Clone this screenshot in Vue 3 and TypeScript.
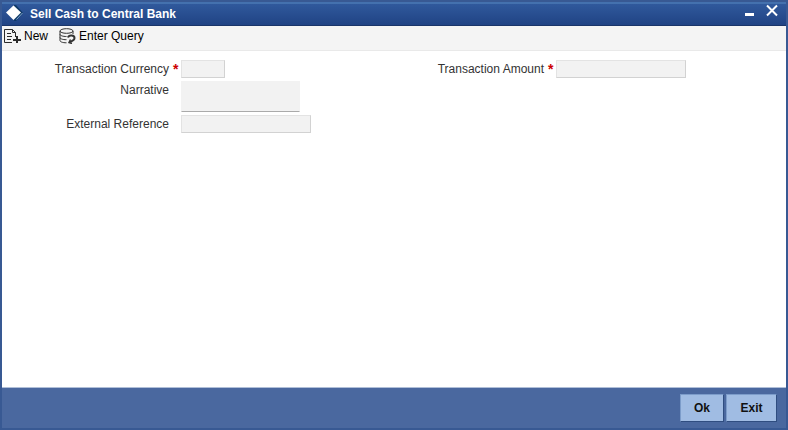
<script setup lang="ts">
import { ref } from 'vue'

const currency = ref('')
const narrative = ref('')
const externalReference = ref('')
const amount = ref('')
</script>

<template>
  <main class="window">
    <header class="titlebar">
      <svg class="logo" width="20" height="18" viewBox="0 0 20 18" aria-hidden="true">
        <path d="M9 1h2l7 8-7 8H9z" fill="#0f3a68" />
        <path d="M17.500 9l-6 6.500" fill="none" stroke="#7fa6c8" stroke-width="1" />
        <path d="M8.500 1.500L16 8.500 8.500 16 1 8.500z" fill="#fff" />
      </svg>
      <h1 class="title">Sell Cash to Central Bank</h1>
      <button class="control" type="button" aria-label="Minimize">
        <svg width="12" height="14" viewBox="0 0 12 14" aria-hidden="true">
          <path d="M1 9h9v3H1z" fill="#fff" />
        </svg>
      </button>
      <button class="control" type="button" aria-label="Close">
        <svg width="12" height="14" viewBox="0 0 12 14" aria-hidden="true">
          <path d="M1 1.500l10 10M11 1.500l-10 10" stroke="#fff" stroke-width="2" />
        </svg>
      </button>
    </header>

    <nav class="toolbar">
      <button class="tool" type="button">
        <svg width="18" height="16" viewBox="0 0 18 16" fill="none" stroke="#2b2b2b" aria-hidden="true">
          <path d="M8 14.500H.5v-13h8l3 3V9" />
          <path d="M8.500 1.500v3h3" />
          <path d="M3 5.500h4M3 8.500h5M3 11.500h4" />
          <path d="M13 8v7M9 12h8" stroke-width="2" />
        </svg>
        New
      </button>
      <button class="tool" type="button">
        <svg width="18" height="16" viewBox="0 0 18 16" fill="none" stroke="#333" aria-hidden="true">
          <ellipse cx="7.500" cy="3" rx="6.500" ry="2.300" />
          <path d="M1 3v9.500c0 1.300 2.500 2.300 6.500 2.300M14 3v3" />
          <path d="M1 6.300c0 1.300 2.800 2.200 6.500 2.200M1 9.500c0 1.300 2.500 2.200 6.500 2.200" />
          <path d="M9 9.500c1-3 6.500-2.500 6.500.5 0 2-2 3-4.500 4" stroke-width="2" />
          <path d="M11.500 11.500L10 14.500l3 1" stroke-width="1.500" />
        </svg>
        Enter Query
      </button>
    </nav>

    <form id="cash-form" class="fields" @submit.prevent>
      <div class="column">
        <div class="field">
          <label for="currency">Transaction Currency</label>
          <span class="required">*</span>
          <input id="currency" v-model="currency" class="short" type="text" required />
        </div>
        <div class="field">
          <label for="narrative">Narrative</label>
          <span class="required"></span>
          <textarea id="narrative" v-model="narrative"></textarea>
        </div>
        <div class="field">
          <label for="reference">External Reference</label>
          <span class="required"></span>
          <input id="reference" v-model="externalReference" type="text" />
        </div>
      </div>
      <div class="column">
        <div class="field">
          <label for="amount">Transaction Amount</label>
          <span class="required">*</span>
          <input id="amount" v-model="amount" type="text" required />
        </div>
      </div>
    </form>

    <footer class="footer">
      <button class="action" type="submit" form="cash-form">Ok</button>
      <button class="action wide" type="button">Exit</button>
    </footer>
  </main>
</template>

<style>
body {
  margin: 0;
}
</style>

<style scoped>
.window {
  box-sizing: border-box;
  display: flex;
  flex-direction: column;
  min-height: 100vh;
  border: 2px solid #385993;
  background: #fff;
  color: #333;
  font-family: "Liberation Sans", Arial, sans-serif;
  font-size: 12px;
}

button {
  font: inherit;
  cursor: pointer;
}

.titlebar {
  box-sizing: border-box;
  display: flex;
  align-items: flex-start;
  gap: 10px;
  height: 24px;
  padding: 0 8px 0 3px;
  border-top: 2px solid #4471ae;
  border-bottom: 1px solid #1a3569;
  background: linear-gradient(#30599c, #204384);
}

.logo {
  flex: none;
}

.title {
  flex: 1;
  margin: 0 0 0 -5px;
  padding-top: 2px;
  color: #fff;
  font-size: 12px;
  line-height: 16px;
}

.control {
  display: flex;
  padding: 0;
  border: 0;
  background: none;
}

.toolbar {
  box-sizing: border-box;
  display: flex;
  align-items: flex-start;
  gap: 11px;
  height: 25px;
  padding: 2px;
  border-bottom: 1px solid #e9e9e9;
  background: #f4f4f4;
}

.tool {
  display: flex;
  align-items: center;
  gap: 2px;
  padding: 0;
  border: 0;
  background: none;
  color: #000;
  line-height: 16px;
}

.fields {
  flex: 1;
  display: grid;
  grid-template-columns: 1fr 1fr;
  align-items: start;
  padding: 9px 34px 9px 0;
}

.column {
  display: grid;
  gap: 3px;
}

.field {
  display: grid;
  grid-template-columns: 167px 12px auto;
  justify-content: start;
  align-items: start;
}

label {
  text-align: right;
  line-height: 18px;
}

.required {
  padding-left: 4px;
  color: #c00;
  font-size: 14px;
  font-weight: bold;
  line-height: 18px;
}

input,
textarea {
  box-sizing: border-box;
  width: 130px;
  height: 18px;
  margin: 0;
  padding: 1px 4px;
  border: 1px solid #e3e3e3;
  border-right-color: #d2d2d2;
  border-bottom-color: #d2d2d2;
  border-radius: 0;
  background: #f2f2f2;
  color: #333;
  font: inherit;
}

.short {
  width: 44px;
}

textarea {
  display: block;
  width: 119px;
  height: 31px;
  border-color: #f2f2f2 #f2f2f2 #aaa;
  resize: none;
}

.footer {
  box-sizing: border-box;
  display: flex;
  justify-content: flex-end;
  gap: 2px;
  height: 41px;
  padding: 6px 9px;
  border-top: 1px solid #b0bfd8;
  background: #4a689f;
}

.action {
  width: 44px;
  height: 28px;
  padding: 0;
  border: 1px solid #7c9cca;
  border-right-color: #2f4d80;
  border-bottom-color: #2f4d80;
  border-radius: 0;
  background: #a0bce3;
  color: #111;
  font-weight: bold;
}

.wide {
  width: 51px;
}
</style>
